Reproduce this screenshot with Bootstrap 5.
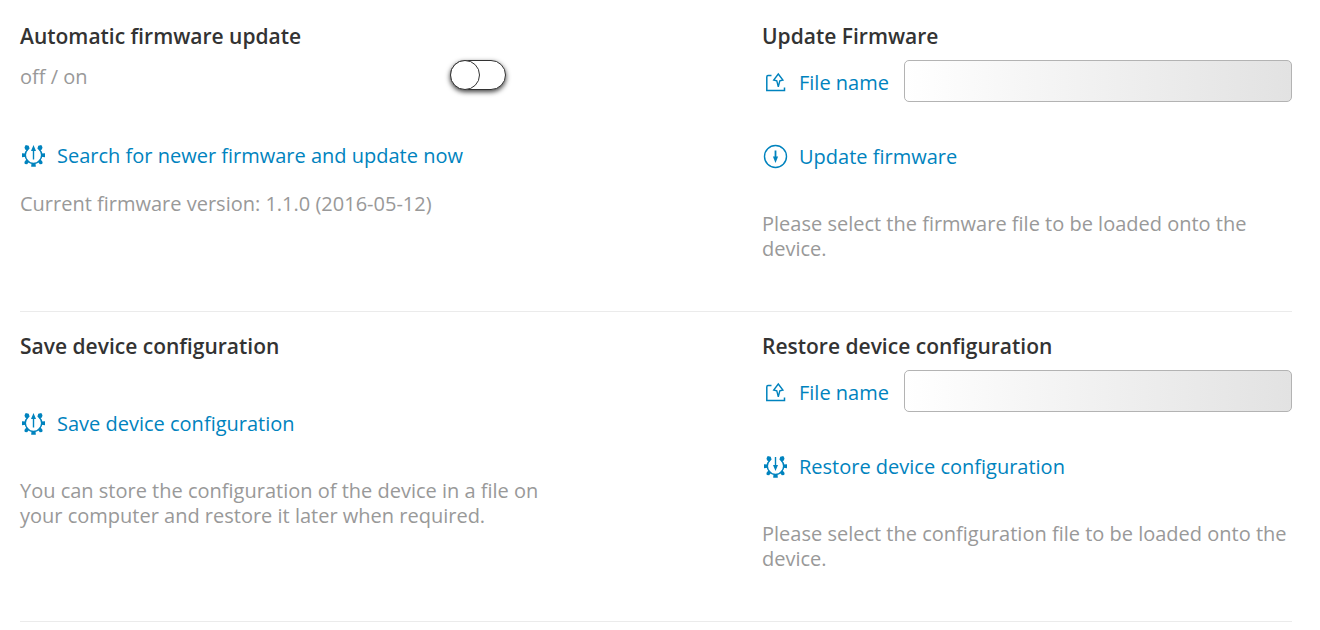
<!DOCTYPE html>
<html lang="en">
<head>
<meta charset="utf-8">
<meta name="viewport" content="width=device-width, initial-scale=1">
<title>Firmware and configuration</title>
<link href="https://cdn.jsdelivr.net/npm/bootstrap@5.3.0/dist/css/bootstrap.min.css" rel="stylesheet">
<style>
body { font-family: "Open Sans", "Noto Sans", sans-serif; font-size: 20px; line-height: 25px; color: #999; background: #fff; }
.page { padding: 2px 28px 0 20px; }
.panel-row { padding: 22px 0 50px; border-bottom: 1px solid #ebebeb; }
h2 { font-size: 21px; line-height: 25px; font-weight: 600; color: #333; margin: 0 0 11px; }
.action { display: inline-flex; align-items: center; gap: 10px; padding: 0; border: 0; background: none; color: #0083be; text-decoration: none; cursor: pointer; }
.action:hover { text-decoration: underline; }
.action svg { width: 27px; height: 27px; margin: -1px 0; flex: none; }
.file-row { height: 42px; margin-bottom: 42px; }
.file-row .action { width: 142px; flex: none; padding-top: 2px; }
.file-field { height: 42px; border: 1px solid #b3b3b3; border-radius: 5px; background: linear-gradient(to right, #fff, #e2e2e2); }
.switch-label { flex: 0 0 58%; }
.form-check-input.toggle { width: 56px; height: 30px; margin: 0; border: 1px solid #333; border-radius: 15px; background: #fff; box-shadow: 0 2px 5px rgba(0,0,0,.75); position: relative; }
.toggle::before { content: ""; position: absolute; top: -1px; left: -1px; width: 30px; height: 30px; border: 1px solid #333; border-radius: 50%; background: #fff; }
.toggle:checked::before { left: auto; right: -1px; }
.search-action { margin-top: 53px; margin-bottom: 23px; }
.hint { margin: 42px 0 0; }
.hint-wide { max-width: 530px; }
.save-action { margin-top: 52px; }
</style>
</head>
<body>
<svg class="d-none" aria-hidden="true">
  <symbol id="gear" viewBox="0 0 27 27">
    <path d="M7.800 7.300A8.200 8.200 0 1 0 19.200 7.300" fill="none" stroke="currentColor" stroke-width="1.500"/>
    <g fill="currentColor">
      <path d="M4.500 5.200l1.200-2.200 3 .8.900 2.600-1.900 2-2.600-.8zM22.500 5.200l-1.200-2.200-3 .8-.9 2.600 1.900 2 2.600-.8z"/>
      <path d="M2 11.200l3.800.4v3.200L2 15.200zM25 11.200l-3.800.4v3.200l3.800.4z"/>
      <path d="M4.400 20l2.300-2.900 2.700 2.500-2.300 2.700-2.300-.4zM22.600 20l-2.300-2.900-2.700 2.500 2.300 2.700 2.300-.4z"/>
      <path d="M11.500 21h4l.3 3.800h-4.600z"/>
    </g>
  </symbol>
  <symbol id="gear-up" viewBox="0 0 27 27">
    <use href="#gear"/>
    <path d="M13.500 7v10.500" stroke="currentColor" stroke-width="1.400"/>
    <path d="M13.500 3l2.500 6h-5z" fill="currentColor"/>
  </symbol>
  <symbol id="gear-down" viewBox="0 0 27 27">
    <use href="#gear"/>
    <path d="M13.500 4v10" stroke="currentColor" stroke-width="1.400"/>
    <path d="M13.500 18l2.500-6h-5z" fill="currentColor"/>
  </symbol>
  <symbol id="upload" viewBox="0 0 27 27">
    <path d="M9.500 6.500H6Q4.800 6.500 4.800 8V21.500H22.500V18.500" fill="none" stroke="currentColor" stroke-width="1.500"/>
    <path d="M16.300 5l4.600 6-3.100.8-1.500 6-1.500-6-3.100-.8z" fill="none" stroke="currentColor" stroke-width="1.400"/>
  </symbol>
  <symbol id="download" viewBox="0 0 27 27">
    <circle cx="13.500" cy="13.500" r="11" fill="none" stroke="currentColor" stroke-width="1.400"/>
    <path d="M13.500 7.500v8" stroke="currentColor" stroke-width="1.800"/>
    <path d="M13.500 20l-2.600-6.500h5.200z" fill="currentColor"/>
  </symbol>
</svg>

<main class="page container-fluid">
  <section class="row g-0 panel-row">
    <div class="col-7">
      <h2>Automatic firmware update</h2>
      <div class="d-flex align-items-start">
        <label class="switch-label pt-1" for="auto-update">off / on</label>
        <input class="form-check-input toggle" type="checkbox" role="switch" id="auto-update">
      </div>
      <div class="d-flex search-action"><a class="action" href="#search"><svg aria-hidden="true"><use href="#gear-up"/></svg>Search for newer firmware and update now</a></div>
      <p class="mb-0">Current firmware version: 1.1.0 (2016-05-12)</p>
    </div>
    <div class="col-5">
      <h2>Update Firmware</h2>
      <div class="file-row d-flex align-items-center">
        <label class="action" for="fw-file"><svg aria-hidden="true"><use href="#upload"/></svg>File name</label>
        <input class="form-control file-field" type="text" id="fw-file" readonly>
      </div>
      <div class="d-flex"><a class="action" href="#update"><svg aria-hidden="true"><use href="#download"/></svg>Update firmware</a></div>
      <p class="hint">Please select the firmware file to be loaded onto the device.</p>
    </div>
  </section>
  <section class="row g-0 panel-row">
    <div class="col-7">
      <h2>Save device configuration</h2>
      <div class="d-flex save-action"><a class="action" href="#save"><svg aria-hidden="true"><use href="#gear-up"/></svg>Save device configuration</a></div>
      <p class="hint hint-wide">You can store the configuration of the device in a file on your computer and restore it later when required.</p>
    </div>
    <div class="col-5">
      <h2>Restore device configuration</h2>
      <div class="file-row d-flex align-items-center">
        <label class="action" for="cfg-file"><svg aria-hidden="true"><use href="#upload"/></svg>File name</label>
        <input class="form-control file-field" type="text" id="cfg-file" readonly>
      </div>
      <div class="d-flex"><a class="action" href="#restore"><svg aria-hidden="true"><use href="#gear-down"/></svg>Restore device configuration</a></div>
      <p class="hint">Please select the configuration file to be loaded onto the device.</p>
    </div>
  </section>
</main>
<script src="https://cdn.jsdelivr.net/npm/bootstrap@5.3.0/dist/js/bootstrap.bundle.min.js"></script>
</body>
</html>
